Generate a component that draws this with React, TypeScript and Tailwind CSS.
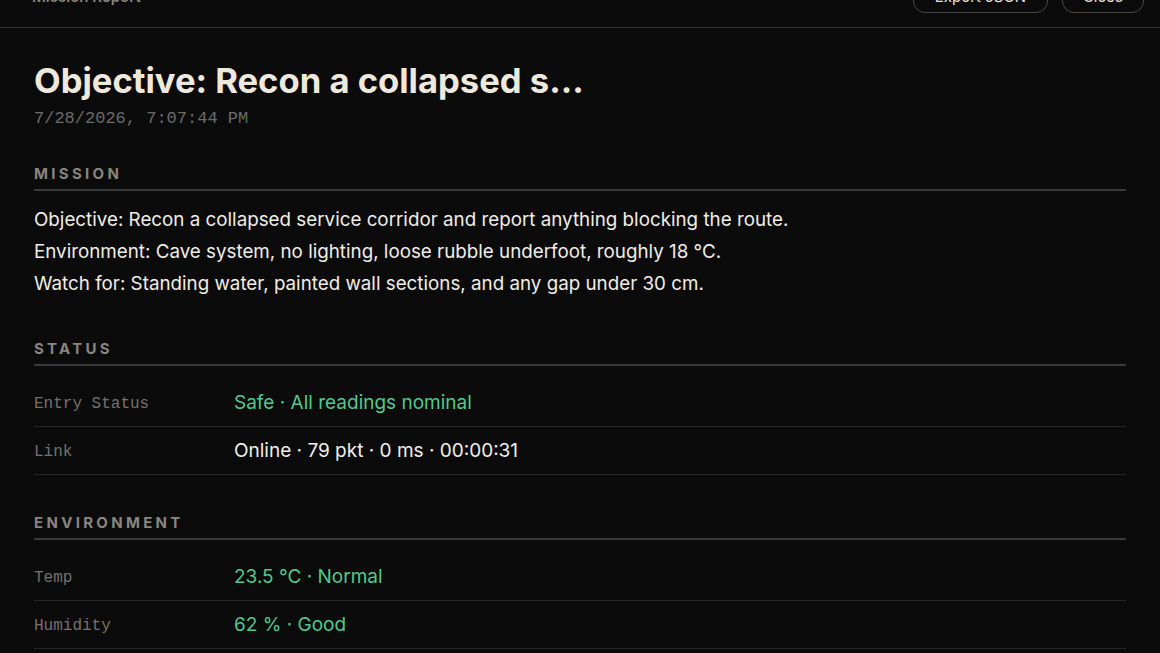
import React from 'react'

type Row = { label: string; value: string; tone?: 'ok' | 'plain' }

const status: Row[] = [
  { label: 'Entry Status', value: 'Safe · All readings nominal', tone: 'ok' },
  { label: 'Link', value: 'Online · 79 pkt · 0 ms · 00:00:31', tone: 'plain' }
]

const environment: Row[] = [
  { label: 'Temp', value: '23.5 °C · Normal', tone: 'ok' },
  { label: 'Humidity', value: '62 % · Good', tone: 'ok' }
]

function SectionLabel({ children }: { children: React.ReactNode }): React.ReactElement {
  return (
    <div className="border-b-2 border-[#3a3a3a] pb-[5px] text-[15px] leading-5 font-bold tracking-[0.22em] text-[#8a857e] uppercase">
      {children}
    </div>
  )
}

function InfoRows({ rows }: { rows: Row[] }): React.ReactElement {
  return (
    <div className="mt-[13px] flex flex-col">
      {rows.map((r) => (
        <div key={r.label} className="flex h-12 items-center border-b border-[#262626] pt-[3px]">
          <span className="w-[200px] shrink-0 font-['Liberation_Mono',monospace] text-[16px] text-[#75716b]">
            {r.label}
          </span>
          <span
            className={
              r.tone === 'ok'
                ? 'text-[19px] text-[#4fc98d]'
                : 'text-[19px] text-[#f2efe8]'
            }
          >
            {r.value}
          </span>
        </div>
      ))}
    </div>
  )
}

export default function App(): React.ReactElement {
  return (
    <div className="min-h-screen overflow-hidden bg-[#0b0b0b] font-['Inter',sans-serif] text-[#f0ede6]">
      {/* Top bar, scrolled partly out of view */}
      <header className="-mt-[33px] flex h-[61px] items-center justify-between border-b border-[#363636] px-4">
        <span className="pl-4 text-[15px] font-semibold text-[#8a857e]">Mission Report</span>
        <div className="flex gap-[14px]">
          <button className="h-[31px] w-[135px] rounded-xl border border-[#4a4a4a] text-[15px] text-[#e8e4dc]">
            Export JSON
          </button>
          <button className="h-[31px] w-[82px] rounded-xl border border-[#4a4a4a] text-[15px] text-[#e8e4dc]">
            Close
          </button>
        </div>
      </header>

      <main className="px-[34px] pt-[30px]">
        <h1 className="text-[34.6px] leading-[44px] font-bold text-[#efe9dd]">
          Objective: Recon a collapsed s...
        </h1>
        <div className="mt-[4px] font-['Liberation_Mono',monospace] text-[17px] text-[#6c6c6c]">
          7/28/2026, 7:07:44 PM
        </div>

        <section className="mt-[32px]">
          <SectionLabel>Mission</SectionLabel>
          <div className="mt-[13px] text-[18.8px] leading-8 text-[#f0ede6]">
            <p>Objective: Recon a collapsed service corridor and report anything blocking the route.</p>
            <p>Environment: Cave system, no lighting, loose rubble underfoot, roughly 18 °C.</p>
            <p>Watch for: Standing water, painted wall sections, and any gap under 30 cm.</p>
          </div>
        </section>

        <section className="mt-[39px]">
          <SectionLabel>Status</SectionLabel>
          <InfoRows rows={status} />
        </section>

        <section className="mt-[38px]">
          <SectionLabel>Environment</SectionLabel>
          <InfoRows rows={environment} />
        </section>
      </main>
    </div>
  )
}
